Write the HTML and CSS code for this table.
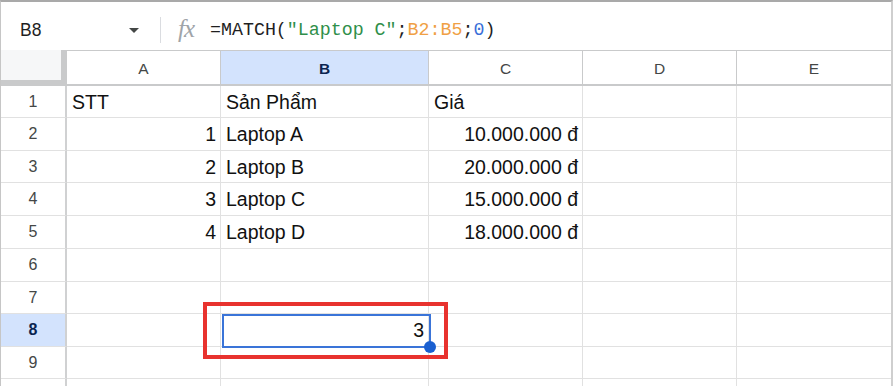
FILE: index.html
```html
<!DOCTYPE html>
<html lang="vi">
<head>
<meta charset="utf-8">
<link rel="stylesheet" href="styles.css">
</head>
<body>
<div class="frame">
  <div class="fbar">
    <div class="namebox">
      <span class="ref">B8</span>
      <span class="caret"></span>
    </div>
    <div class="sep"></div>
    <span class="fx">fx</span>
    <div class="formula">=MATCH(<span class="str">"Laptop C"</span>;<span class="rng">B2:B5</span>;<span class="num">0</span>)</div>
  </div>
  <div class="sheet">
    <div class="corner"></div>
    <div class="ch">A</div><div class="ch sel">B</div><div class="ch">C</div><div class="ch">D</div><div class="ch">E</div>

    <div class="rh">1</div><div class="c">STT</div><div class="c">Sản Phẩm</div><div class="c">Giá</div><div class="c"></div><div class="c"></div>
    <div class="rh">2</div><div class="c r">1</div><div class="c">Laptop A</div><div class="c r">10.000.000 đ</div><div class="c"></div><div class="c"></div>
    <div class="rh">3</div><div class="c r">2</div><div class="c">Laptop B</div><div class="c r">20.000.000 đ</div><div class="c"></div><div class="c"></div>
    <div class="rh">4</div><div class="c r">3</div><div class="c">Laptop C</div><div class="c r">15.000.000 đ</div><div class="c"></div><div class="c"></div>
    <div class="rh">5</div><div class="c r">4</div><div class="c">Laptop D</div><div class="c r">18.000.000 đ</div><div class="c"></div><div class="c"></div>
    <div class="rh">6</div><div class="c"></div><div class="c"></div><div class="c"></div><div class="c"></div><div class="c"></div>
    <div class="rh">7</div><div class="c"></div><div class="c"></div><div class="c"></div><div class="c"></div><div class="c"></div>
    <div class="rh sel">8</div><div class="c"></div><div class="c r">3</div><div class="c"></div><div class="c"></div><div class="c"></div>
    <div class="rh">9</div><div class="c"></div><div class="c"></div><div class="c"></div><div class="c"></div><div class="c"></div>
    <div class="rh"></div><div class="c"></div><div class="c"></div><div class="c"></div><div class="c"></div><div class="c"></div>

    <div class="active"><span class="handle"></span></div>
    <div class="highlight"></div>
  </div>
</div>
</body>
</html>
```

FILE: styles.css
```css
* { box-sizing: border-box; }
html, body {
  margin: 0;
  padding: 0;
  width: 894px;
  height: 386px;
  overflow: hidden;
  background: #ffffff;
  font-family: "Liberation Sans", Arial, sans-serif;
}
.frame {
  width: 893px;
  height: 386px;
  border-top: 2px solid #a9a9a9;
  border-left: 1px solid #c6c6c6;
  border-right: 2px solid #cfcfcf;
  overflow: hidden;
  position: relative;
}
.fbar {
  height: 48px;
  display: flex;
  align-items: center;
  padding-top: 8px;
  background: #ffffff;
}
.namebox {
  width: 150px;
  display: flex;
  align-items: center;
  justify-content: space-between;
  padding-left: 19px;
  padding-right: 12px;
}
.ref {
  font-size: 17.5px;
  color: #1f1f1f;
}
.caret {
  width: 0;
  height: 0;
  border-left: 5px solid transparent;
  border-right: 5px solid transparent;
  border-top: 5px solid #444746;
  margin-top: 1px;
}
.sep {
  width: 1px;
  height: 26px;
  background: #dadce0;
  margin-left: 9px;
}
.fx {
  font-family: "Liberation Serif", serif;
  font-style: italic;
  font-size: 25px;
  color: #a0a4a8;
  margin-left: 17px;
  letter-spacing: -1px;
  margin-top: -3px;
}
.formula {
  font-family: "Liberation Mono", "DejaVu Sans Mono", monospace;
  font-size: 18.3px;
  color: #1f1f1f;
  margin-left: 16px;
  margin-top: -1px;
}
.str { color: #2f8f4a; }
.rng { color: #f0a044; }
.num { color: #3a6fd8; }

.sheet {
  position: relative;
  display: grid;
  grid-template-columns: 66px 154px 208px 154px 154px 155px;
  grid-template-rows: 36px 32px 33px 32px 33px 33px 33px 32px 33px 32px 40px;
  border-bottom: 2px solid #c2c2c2;
}
.corner {
  background: #f6f7f8;
  border-right: 6px solid #c9cacb;
  border-bottom: 6px solid #c9cacb;
}
.ch {
  border-bottom: 2px solid #c9cacb;
  border-right: 1px solid #c9cacb;
  border-top: 1px solid #c9cacb;
  display: flex;
  align-items: center;
  justify-content: center;
  font-size: 15.5px;
  color: #444746;
  padding-top: 2px;
}
.ch.sel, .rh.sel {
  background: #d3e3fd;
  color: #0b2550;
  font-weight: bold;
}
.rh {
  border-right: 2px solid #d0d1d2;
  border-bottom: 1px solid #e1e1e1;
  display: flex;
  align-items: center;
  justify-content: center;
  font-size: 16px;
  color: #444746;
}
.c {
  border-right: 1px solid #e1e1e1;
  border-bottom: 1px solid #e1e1e1;
  font-size: 19.5px;
  color: #111111;
  padding: 0 4px 0 5px;
  display: flex;
  align-items: center;
  white-space: nowrap;
  padding-top: 1px;
}
.c.r {
  justify-content: flex-end;
}
.active {
  position: absolute;
  left: 221px;
  top: 264px;
  width: 209px;
  height: 34px;
  border: 2px solid #3a74d8;
}
.handle {
  position: absolute;
  right: -7px;
  bottom: -7px;
  width: 12px;
  height: 12px;
  border-radius: 50%;
  background: #1a5fd0;
}
.highlight {
  position: absolute;
  left: 202px;
  top: 252px;
  width: 245px;
  height: 57px;
  border: 4px solid #e8322e;
}
```
